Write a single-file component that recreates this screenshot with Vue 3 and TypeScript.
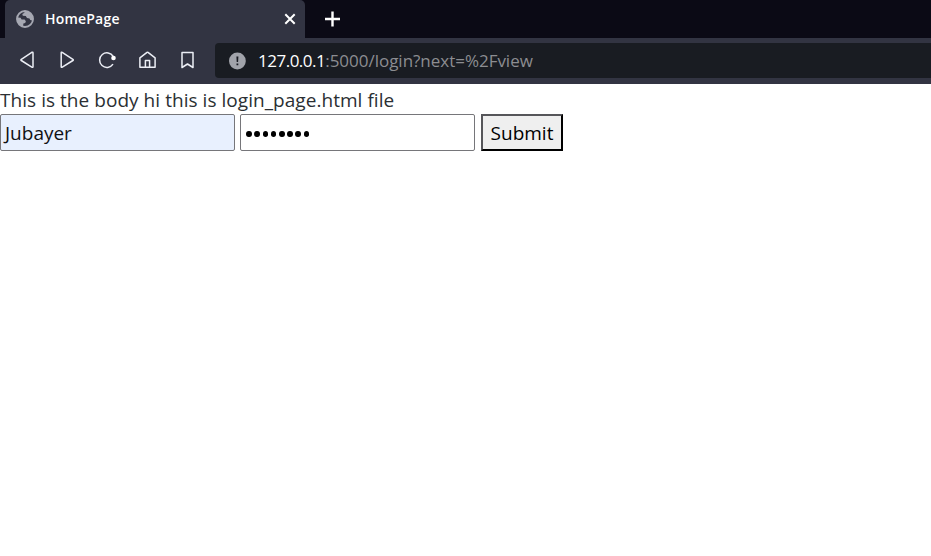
<script setup lang="ts">
import { ref } from 'vue'

const title = ref('HomePage')
const host = ref('127.0.0.1')
const path = ref(':5000/login?next=%2Fview')
const username = ref('Jubayer')
const secretLength = ref(8)
</script>

<template>
  <div class="browser">
    <div class="tabs">
      <div class="tab">
        <svg class="globe" width="18" height="18" viewBox="0 0 18 18">
          <circle cx="9" cy="9" r="8" fill="#323442" stroke="#a6a8b2" stroke-width="1.9" />
          <path d="M1.2 7.6 4.6 7.8 5.6 9.4 8.6 9.6 9.9 11.2 9.2 13 7.4 13.6 7 16.8C3.6 16.2 1 13 1.2 7.6Z" fill="#a6a8b2" />
          <path d="M9 1 8.1 3 6.3 4.1 6.8 5.8 9.8 6.1 11 8.1 13.5 8.4 14.2 10.1 16.8 10.4C17.6 5.5 14.2 1 9 1Z" fill="#a6a8b2" />
        </svg>
        <span class="title">{{ title }}</span>
        <svg class="close" width="12" height="12" viewBox="0 0 12 12">
          <path d="M1.3 1.3 10.7 10.7M10.7 1.3 1.3 10.7" stroke="#fff" stroke-width="2" />
        </svg>
      </div>
      <svg class="plus" width="16" height="16" viewBox="0 0 16 16">
        <path d="M7.5 .5V15.5M0 8H15" stroke="#fff" stroke-width="2.4" />
      </svg>
    </div>

    <div class="toolbar">
      <div class="nav">
        <svg width="20" height="20" viewBox="0 0 20 20">
          <path d="M14.8 2.3Q16 1.8 16 3V16.4Q16 17.8 14.8 17.1L4.3 10.5Q3.5 10 4.3 9.4Z" />
        </svg>
        <svg width="20" height="20" viewBox="0 0 20 20">
          <path d="M5.2 2.3Q4.2 1.8 4.2 3V16.4Q4.2 17.8 5.3 17.1L15.9 10.5Q16.7 10 15.9 9.4Z" />
        </svg>
        <svg width="20" height="20" viewBox="0 0 20 20">
          <path d="M16.2 6.4A7.3 7.3 0 1 0 16 14.2" />
          <circle cx="16.5" cy="8" r="2.3" class="dot" />
        </svg>
        <svg width="20" height="20" viewBox="0 0 20 20">
          <path d="M2.9 7.8 10 2.3Q10.5 2 11 2.3L18.1 7.8V17.3H2.9ZM8.4 17V10.5H12.6V17" />
        </svg>
        <svg width="20" height="20" viewBox="0 0 20 20">
          <path d="M5 2.4H16V17.5L10.5 14 5 17.5Z" />
        </svg>
      </div>
      <div class="address">
        <svg width="18" height="18" viewBox="0 0 18 18">
          <circle cx="9.4" cy="9" r="8.4" fill="#a1a3aa" />
          <path d="M8.4 4.4H10.4L10.1 10H8.7ZM8.5 11.5H10.3V13.2H8.5Z" fill="#191b22" />
        </svg>
        <span class="host">{{ host }}</span><span class="path">{{ path }}</span>
      </div>
    </div>

    <main class="page">
      <p class="message">This is the body hi this is login_page.html file</p>
      <form class="form" @submit.prevent>
        <div class="field filled">{{ username }}</div>
        <div class="field"><i v-for="n in secretLength" :key="n" class="bullet"></i></div>
        <button class="submit" type="submit"><span>Submit</span></button>
      </form>
    </main>
  </div>
</template>

<style>
body {
  margin: 0;
  background: #fff;
}
</style>

<style scoped>
.browser {
  height: 556px;
  overflow: hidden;
  font-family: "Open Sans", "Noto Sans", sans-serif;
  background: #fff;
}
.tabs {
  display: flex;
  height: 38px;
  background: #0b0a15;
}
.tab {
  display: flex;
  align-items: center;
  box-sizing: border-box;
  width: 300px;
  height: 38px;
  margin-left: 5px;
  padding: 0 9px 0 11px;
  border-radius: 5px 5px 0 0;
  background: #323442;
}
.title {
  margin-left: 11px;
  color: #fff;
  font-size: 14px;
  font-weight: 600;
  letter-spacing: 0.2px;
  line-height: 38px;
  white-space: nowrap;
}
.close {
  margin-left: auto;
}
.plus {
  margin: 11px 0 0 20px;
}
.toolbar {
  display: flex;
  box-sizing: border-box;
  height: 46px;
  padding-top: 5px;
  background: #323442;
}
.nav {
  display: flex;
  gap: 20px;
  width: 198px;
  padding: 7px 0 0 17px;
  box-sizing: content-box;
  fill: none;
  stroke: #eceef5;
  stroke-width: 1.5;
  stroke-linejoin: round;
}
.nav .dot {
  fill: #fff;
  stroke: none;
}
.address {
  display: flex;
  flex: 1;
  align-items: center;
  height: 35px;
  padding-left: 13px;
  border-radius: 4px 0 0 4px;
  background: #191c22;
  font-size: 17px;
  line-height: 35px;
  white-space: nowrap;
}
.host {
  margin-left: 12px;
  color: #fff;
  letter-spacing: -0.5px;
}
.path {
  color: #8c8d91;
  letter-spacing: -0.02px;
}
.page {
  color: #2b2f33;
  font-size: 19px;
}
.message {
  height: 30px;
  margin: 0;
  letter-spacing: 0.045px;
  line-height: 32px;
  white-space: nowrap;
}
.form {
  display: flex;
}
.field {
  display: flex;
  align-items: center;
  box-sizing: border-box;
  width: 235px;
  height: 37px;
  margin-right: 5px;
  padding: 0 4px;
  border: 1px solid #76767a;
  border-radius: 2px;
  background: #fff;
  color: #101114;
}
.filled {
  background: #e8f0fe;
}
.bullet {
  width: 5.6px;
  height: 6px;
  margin: 2px 1.3px 0;
  border-radius: 50%;
  background: #000;
}
.submit {
  width: 82px;
  height: 37px;
  margin: 0 0 0 1px;
  padding: 0;
  border: 2px solid;
  border-color: #56565a #000 #000 #56565a;
  border-radius: 0;
  background: #efefef;
  color: #000;
  font: inherit;
}
</style>
